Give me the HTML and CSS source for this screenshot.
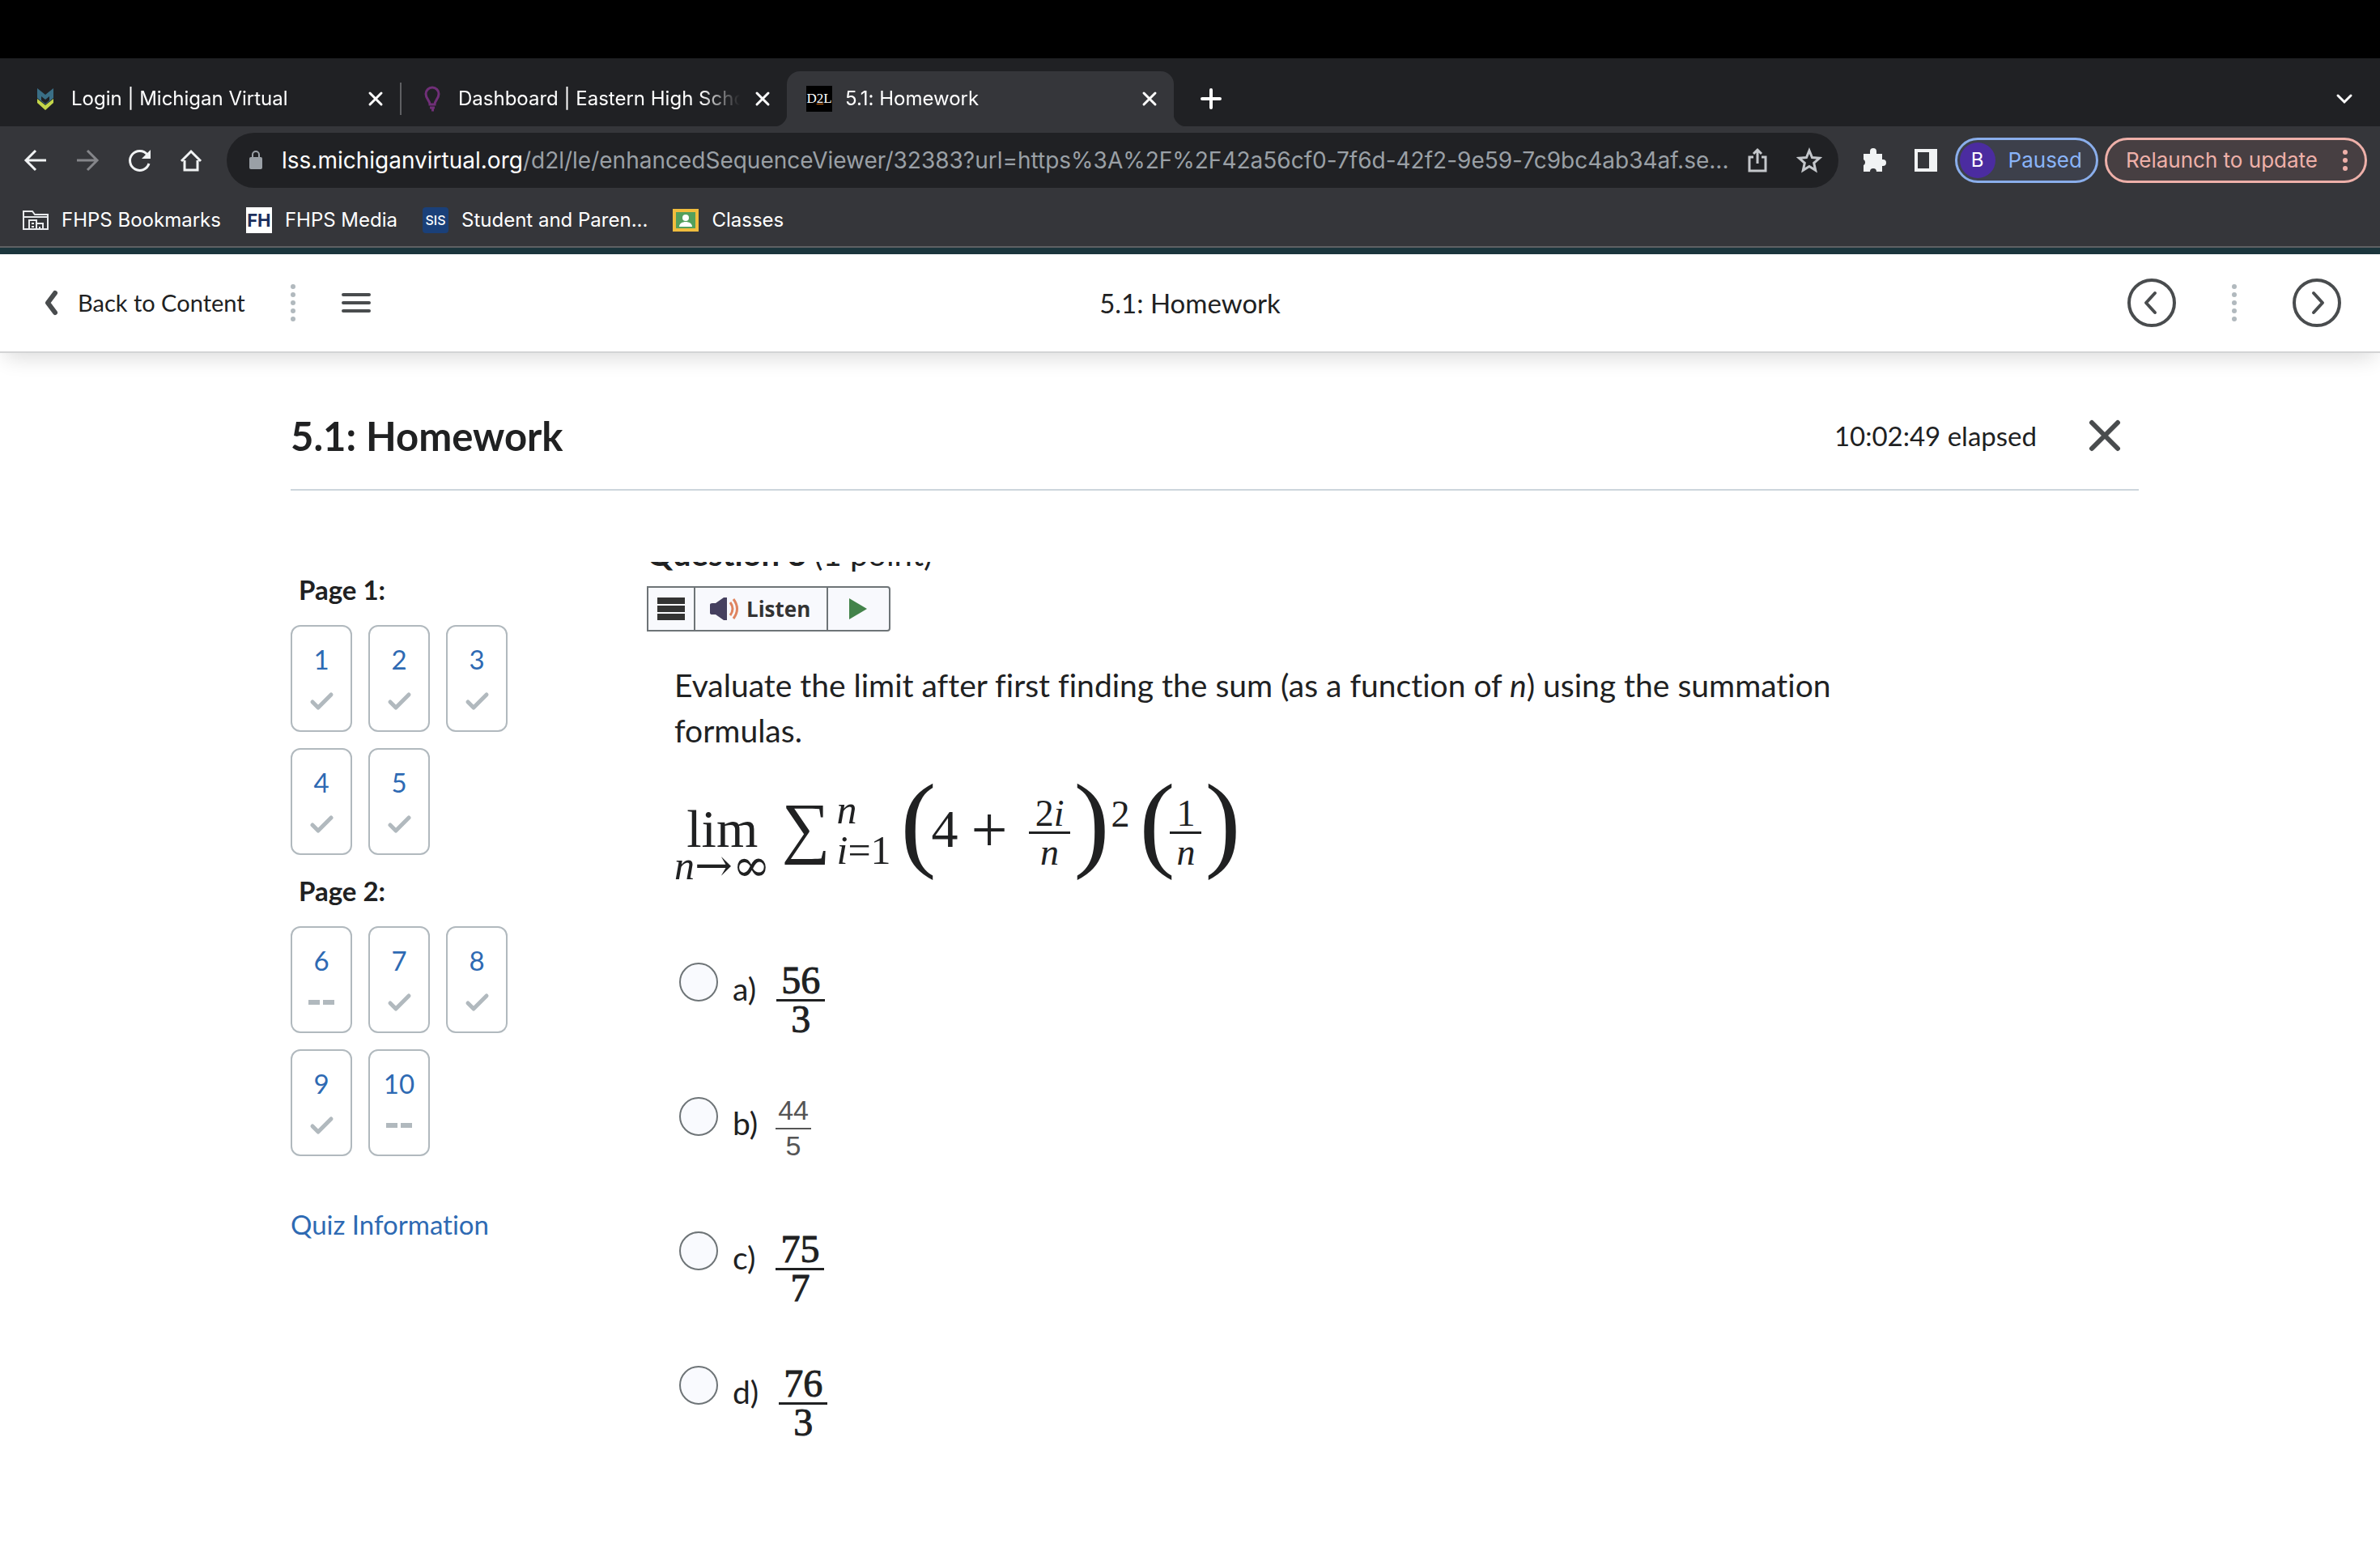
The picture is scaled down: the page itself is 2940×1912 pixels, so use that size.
FILE: index.html
```html
<!DOCTYPE html>
<html lang="en">
<head>
  <meta charset="UTF-8">
  <meta name="viewport" content="width=device-width, initial-scale=1.0">
  <title>5.1: Homework</title>
  <link rel="stylesheet" href="styles.css">
</head>
<body>
  <!-- Browser -->
  <div class="browser">
    <div class="tabstrip">
      <div class="tab">
        <svg class="favicon" viewBox="0 0 32 32"><path d="M6 3l10 8 10-8v12l-10 8-10-8z" fill="#3a6f86"/><path d="M11 13l5 4 5-4v5l-5 4-5-4z" fill="#202124"/><path d="M6 16l10 8 10-8v5l-10 9-10-9z" fill="#c3d64a"/></svg>
        <span class="tab-title">Login | Michigan Virtual</span>
        <button class="tab-close" aria-label="Close tab"><svg viewBox="0 0 32 32"><path d="M9 9l14 14M23 9L9 23"/></svg></button>
      </div>
      <div class="tab tab-divided">
        <svg class="favicon" viewBox="0 0 32 32"><path d="M13 23c0-5-5-7-5-13a8 8 0 0 1 16 0c0 6-5 8-5 13zM13 27h6M15 30h3" fill="none" stroke="#702f78" stroke-width="3"/></svg>
        <span class="tab-title">Dashboard | Eastern High School</span>
        <button class="tab-close" aria-label="Close tab"><svg viewBox="0 0 32 32"><path d="M9 9l14 14M23 9L9 23"/></svg></button>
      </div>
      <div class="tab tab-active">
        <span class="favicon d2l">D<u>2</u>L</span>
        <span class="tab-title">5.1: Homework</span>
        <button class="tab-close" aria-label="Close tab"><svg viewBox="0 0 32 32"><path d="M9 9l14 14M23 9L9 23"/></svg></button>
      </div>
      <button class="tab-new" aria-label="New tab"><svg viewBox="0 0 32 32"><path d="M16 5v22M5 16h22"/></svg></button>
      <button class="tab-search" aria-label="Search tabs"><svg viewBox="0 0 32 32"><path d="M8 12l8 8 8-8"/></svg></button>
    </div>

    <div class="toolbar">
      <button class="tool" aria-label="Back"><svg viewBox="0 0 32 32"><path d="M29 16H4M16 4L4 16l12 12"/></svg></button>
      <button class="tool tool-off" aria-label="Forward"><svg viewBox="0 0 32 32"><path d="M3 16h25M16 4l12 12-12 12"/></svg></button>
      <button class="tool" aria-label="Reload"><svg viewBox="0 0 32 32"><path d="M28 20a12 12 0 1 1-2-11l2 3"/><path d="M30 3v11H19z" fill="#f1f3f4" stroke="none"/></svg></button>
      <button class="tool" aria-label="Home"><svg viewBox="0 0 32 32"><path d="M8 16v12h16V16M4 17L16 5l12 12"/></svg></button>
      <div class="omnibox">
        <svg class="lock" viewBox="0 0 32 32"><rect x="8" y="12" width="16" height="15" rx="2" fill="#9aa0a6"/><path d="M12 13V9a4 4 0 0 1 8 0v4" fill="none" stroke="#9aa0a6" stroke-width="2"/></svg>
        <div class="url" role="textbox" aria-label="Address"><b>lss.michiganvirtual.org</b>/d2l/le/enhancedSequenceViewer/32383?url=https%3A%2F%2F42a56cf0-7f6d-42f2-9e59-7c9bc4ab34af.se...</div>
        <button class="omni-btn" aria-label="Share"><svg viewBox="0 0 32 32"><path d="M11 12H6v17h20V12h-5M16 20V3M11 8l5-5 5 5"/></svg></button>
        <button class="omni-btn" aria-label="Bookmark"><svg viewBox="0 0 32 32"><path d="M16 4l3.500 8.500 9 .8-6.800 6 2 9L16 23.500 8.300 28.300l2-9-6.800-6 9-.8z"/></svg></button>
      </div>
      <button class="tool" aria-label="Extensions"><svg viewBox="0 0 32 32"><path d="M3 8h8V5a4 4 0 0 1 8 0v3h7v7h1a4 4 0 0 1 0 8h-1v7h-7a4 4 0 0 0-8 0H3v-8a4 4 0 0 0 0-7z" fill="#f1f3f4" stroke="none"/></svg></button>
      <button class="tool" aria-label="Side panel"><svg viewBox="0 0 32 32"><path d="M2 2h28v28H2zM6 6v20h14V6z" fill="#f1f3f4" fill-rule="evenodd" stroke="none"/></svg></button>
      <button class="pill pill-blue"><span class="avatar">B</span>Paused</button>
      <button class="pill pill-red">Relaunch to update<svg viewBox="0 0 8 28"><circle cx="4" cy="4" r="3"/><circle cx="4" cy="14" r="3"/><circle cx="4" cy="24" r="3"/></svg></button>
    </div>

    <div class="bookmarks">
      <a href="#"><svg viewBox="0 0 32 32" fill="none" stroke="#e8eaed" stroke-width="2"><path d="M1 27V5h11l3 4h16v18zM1 12h30"/><path d="M8 27V16h9v11M17 20h8v7M11 20h3M11 24h3M21 24v3"/></svg>FHPS Bookmarks</a>
      <a href="#"><span class="site site-fh">FH</span>FHPS Media</a>
      <a href="#"><span class="site site-sis">SIS</span>Student and Paren...</a>
      <a href="#"><svg viewBox="0 0 32 32"><path d="M0 2h32v28H0z" fill="#f0bd3e"/><path d="M4 6h24v20H4z" fill="#54a05c"/><circle cx="16" cy="13" r="4" fill="#fff"/><path d="M8 24c0-8 16-8 16 0z" fill="#fff"/></svg>Classes</a>
    </div>
  </div>

  <!-- Content viewer bar -->
  <nav class="viewer">
    <div class="viewer-left">
      <a class="back" href="#"><svg viewBox="0 0 18 32"><path d="M14 4L5 16l9 12"/></svg>Back to Content</a>
      <svg class="dots" viewBox="0 0 6 46"><circle cx="3" cy="3" r="3"/><circle cx="3" cy="13" r="3"/><circle cx="3" cy="23" r="3"/><circle cx="3" cy="33" r="3"/><circle cx="3" cy="43" r="3"/></svg>
      <button class="menu" aria-label="Table of contents"><svg viewBox="0 0 36 24"><path d="M2 2h32M2 12h32M2 22h32"/></svg></button>
    </div>
    <span class="viewer-title">5.1: Homework</span>
    <div class="viewer-right">
      <button class="round" aria-label="Previous"><svg viewBox="0 0 60 60"><circle cx="30" cy="30" r="28"/><path d="M34 18L23 30l11 12"/></svg></button>
      <svg class="dots" viewBox="0 0 6 46"><circle cx="3" cy="3" r="3"/><circle cx="3" cy="13" r="3"/><circle cx="3" cy="23" r="3"/><circle cx="3" cy="33" r="3"/><circle cx="3" cy="43" r="3"/></svg>
      <button class="round" aria-label="Next"><svg viewBox="0 0 60 60"><circle cx="30" cy="30" r="28"/><path d="M26 18l11 12-11 12"/></svg></button>
    </div>
  </nav>

  <!-- Quiz -->
  <div class="quiz">
    <header class="quiz-header">
      <h1>5.1: Homework</h1>
      <span class="timer">10:02:49 elapsed</span>
      <button class="exit" aria-label="Exit quiz"><svg viewBox="0 0 40 40"><path d="M4 4l32 32M36 4L4 36"/></svg></button>
    </header>

    <div class="quiz-body">
      <aside class="pages">
        <h2>Page 1:</h2>
        <div class="numbers">
          <a href="#">1<svg viewBox="0 0 32 32"><path class="check" d="M5 17l7 7L28 8"/></svg></a>
          <a href="#">2<svg viewBox="0 0 32 32"><path class="check" d="M5 17l7 7L28 8"/></svg></a>
          <a href="#">3<svg viewBox="0 0 32 32"><path class="check" d="M5 17l7 7L28 8"/></svg></a>
          <a href="#">4<svg viewBox="0 0 32 32"><path class="check" d="M5 17l7 7L28 8"/></svg></a>
          <a href="#">5<svg viewBox="0 0 32 32"><path class="check" d="M5 17l7 7L28 8"/></svg></a>
        </div>
        <h2>Page 2:</h2>
        <div class="numbers">
          <a href="#">6<svg viewBox="0 0 32 32"><path class="dash" d="M0 16h14M18 16h14"/></svg></a>
          <a href="#">7<svg viewBox="0 0 32 32"><path class="check" d="M5 17l7 7L28 8"/></svg></a>
          <a href="#">8<svg viewBox="0 0 32 32"><path class="check" d="M5 17l7 7L28 8"/></svg></a>
          <a href="#">9<svg viewBox="0 0 32 32"><path class="check" d="M5 17l7 7L28 8"/></svg></a>
          <a href="#">10<svg viewBox="0 0 32 32"><path class="dash" d="M0 16h14M18 16h14"/></svg></a>
        </div>
        <a class="info" href="#">Quiz Information</a>
      </aside>

      <main class="question">
        <h2 class="question-title">Question 8 <span>(1 point)</span></h2>
        <div class="reader">
          <button aria-label="Reader menu"><svg class="bars" viewBox="0 0 34 28"><path d="M0 4h34M0 14h34M0 24h34"/></svg></button>
          <button><svg class="speaker" viewBox="0 0 36 28"><path d="M0 9q0-2 3-2h4l10-7h4v28h-4L7 21H3q-3 0-3-2z" fill="#45405f"/><path d="M25 6q6 8 0 16M29 2q9 12 0 24" fill="none" stroke="#df8460" stroke-width="3"/></svg>Listen</button>
          <button aria-label="Play"><svg class="play" viewBox="0 0 22 26"><path d="M0 0l22 13L0 26z"/></svg></button>
        </div>

        <div class="prompt">
          <p>Evaluate the limit after first finding the sum (as a function of <i>n</i>) using the summation formulas.</p>
          <div class="formula">
            <span class="lim"><span>lim</span><small><i>n</i><span class="symbol">→∞</span></small></span>
            <span class="sum">∑</span>
            <span class="limits"><i>n</i><span><i>i</i>=1</span></span>
            <span class="paren open">(</span>
            <span class="term">4</span>
            <span class="plus">+</span>
            <span class="frac"><span>2<i>i</i></span><i>n</i></span>
            <span class="paren close">)</span>
            <span class="power">2</span>
            <span class="paren open">(</span>
            <span class="frac"><span>1</span><i>n</i></span>
            <span class="paren close">)</span>
          </div>
        </div>

        <div class="answers">
          <label><input type="radio" name="answer">a)<span class="value"><span>56</span><span>3</span></span></label>
          <label><input type="radio" name="answer">b)<span class="value value-small"><span>44</span><span>5</span></span></label>
          <label><input type="radio" name="answer">c)<span class="value"><span>75</span><span>7</span></span></label>
          <label><input type="radio" name="answer">d)<span class="value"><span>76</span><span>3</span></span></label>
        </div>
      </main>
    </div>
  </div>
</body>
</html>
```
FILE: styles.css
```css
* {
  box-sizing: border-box;
}
body {
  margin: 0;
  background: #fff;
  color: #202122;
  font-family: Lato, sans-serif;
  font-size: 33px;
  font-variant-ligatures: none;
  line-height: 40px;
}
button {
  background: none;
  border: none;
  padding: 0;
  margin: 0;
  font: inherit;
  color: inherit;
  cursor: pointer;
}
a {
  text-decoration: none;
}
svg {
  display: block;
  flex: none;
}

/* browser */
.browser {
  border-top: 72px solid #000;
  border-bottom: 8px solid #1c363d;
  background: #35363a;
  color: #fff;
  font-family: Inter, sans-serif;
  font-size: 24px;
  line-height: 32px;
}
.tabstrip {
  display: flex;
  align-items: center;
  height: 84px;
  padding: 16px 28px 0 16px;
  background: #202124;
}
.tab {
  position: relative;
  display: flex;
  align-items: center;
  gap: 16px;
  width: 478px;
  height: 68px;
  padding: 0 14px 0 24px;
}
.tab-divided::before {
  content: "";
  position: absolute;
  left: 0;
  top: 14px;
  width: 2px;
  height: 40px;
  background: #5f6063;
}
.tab-active {
  background: #35363a;
  border-radius: 16px 16px 0 0;
}
.tab-active::before,
.tab-active::after {
  content: "";
  position: absolute;
  bottom: 0;
  width: 16px;
  height: 16px;
}
.tab-active::before {
  left: -16px;
  background: radial-gradient(circle at 0 0, #202124 16px, #35363a 17px);
}
.tab-active::after {
  right: -16px;
  background: radial-gradient(circle at 100% 0, #202124 16px, #35363a 17px);
}
.favicon {
  width: 32px;
  height: 32px;
  flex: none;
}
.d2l {
  background: #000;
  font-family: "Liberation Serif", serif;
  font-size: 17px;
  text-align: center;
}
.d2l u {
  text-decoration-color: #e87511;
}
.tab-title {
  flex: 1;
  margin-right: -4px;
  overflow: hidden;
  white-space: nowrap;
  -webkit-mask-image: linear-gradient(to right, #000 86%, transparent);
  mask-image: linear-gradient(to right, #000 86%, transparent);
}
.tab-close svg,
.tab-new svg,
.tab-search svg {
  width: 32px;
  height: 32px;
  fill: none;
  stroke: #fff;
  stroke-width: 3;
  stroke-linecap: round;
}
.tab-new {
  margin-left: 30px;
}
.tab-new svg {
  stroke-width: 4;
}
.tab-search {
  margin-left: auto;
}
.toolbar {
  display: flex;
  align-items: center;
  gap: 32px;
  height: 84px;
  padding: 0 16px 0 28px;
}
.tool svg {
  width: 32px;
  height: 32px;
  fill: none;
  stroke: #f1f3f4;
  stroke-width: 3;
}
.tool-off svg {
  stroke: #85868a;
}
.omnibox {
  flex: 1;
  min-width: 0;
  display: flex;
  align-items: center;
  gap: 32px;
  height: 68px;
  margin: 0 -4px 0 -4px;
  padding: 0 20px;
  border-radius: 34px;
  background: #202124;
  color: #9aa0a6;
  font-size: 28px;
}
.lock {
  width: 32px;
  height: 32px;
  margin-right: -16px;
}
.url {
  flex: 1;
  margin-right: -20px;
  overflow: hidden;
  white-space: nowrap;
}
.url b {
  color: #fff;
  font-weight: 400;
}
.omni-btn svg {
  width: 32px;
  height: 32px;
  fill: none;
  stroke: #c4c7cb;
  stroke-width: 3;
}
.pill {
  display: flex;
  align-items: center;
  height: 56px;
  border: 3px solid;
  border-radius: 28px;
  font-size: 26px;
  white-space: nowrap;
}
.pill-blue {
  gap: 16px;
  margin: 0 -24px 0 -12px;
  padding: 0 17px 0 3px;
  color: #8ab4f8;
  background: #3d404b;
  border-color: #8aaeeb;
}
.avatar {
  width: 44px;
  height: 44px;
  border-radius: 50%;
  background: #4b2ca0;
  color: #fff;
  font-size: 24px;
  line-height: 44px;
}
.pill-red {
  gap: 30px;
  padding: 0 20px 0 23px;
  color: #eeb0a9;
  background: #473f42;
}
.pill-red svg {
  width: 8px;
  height: 28px;
  fill: #eeb0a9;
}
.bookmarks {
  display: flex;
  gap: 31px;
  height: 66px;
  padding: 16px 28px 0;
  border-bottom: 2px solid #5f6063;
}
.bookmarks a {
  display: flex;
  gap: 16px;
  height: 32px;
  color: #fff;
}
.bookmarks svg,
.site {
  width: 32px;
  height: 32px;
}
.site {
  font-weight: 700;
  text-align: center;
}
.site-fh {
  background: #fff;
  color: #1d2f5c;
  font-size: 22px;
}
.site-sis {
  background: #1a4079;
  border-radius: 4px;
  font-size: 16px;
  font-weight: 500;
}

/* viewer bar */
.viewer {
  display: grid;
  grid-template-columns: 1fr auto 1fr;
  align-items: center;
  height: 122px;
  padding: 0 48px;
  border-bottom: 2px solid #d3d4d5;
  box-shadow: 0 12px 24px -6px rgba(0, 0, 0, 0.14);
}
.viewer-left,
.viewer-right,
.back {
  display: flex;
  align-items: center;
}
.viewer-right {
  justify-content: flex-end;
  gap: 69px;
}
.back {
  gap: 24px;
  padding-left: 6px;
  color: #202122;
  font-size: 29px;
}
.back svg {
  width: 18px;
  height: 32px;
  stroke-width: 6;
}
.back svg,
.menu svg,
.round svg,
.exit svg {
  fill: none;
  stroke: #494c4e;
  stroke-linecap: round;
  stroke-linejoin: round;
}
.dots {
  width: 6px;
  height: 46px;
  fill: #b1b9be;
}
.viewer-left .dots {
  margin: 0 57px 0 56px;
}
.menu svg {
  width: 36px;
  height: 24px;
  stroke-width: 4;
}
.round svg {
  width: 60px;
  height: 60px;
  stroke-width: 4;
}

/* quiz */
.quiz {
  padding: 0 298px 0 359px;
}
.quiz-header {
  display: flex;
  align-items: center;
  padding: 73px 22px 37px 0;
  border-bottom: 2px solid #cdd5dc;
}
.quiz-header h1 {
  flex: 1;
  margin: 0;
  font-size: 49px;
  line-height: 58px;
}
.exit {
  margin-left: 64px;
}
.exit svg {
  width: 40px;
  height: 40px;
  stroke-width: 6;
}
.quiz-body {
  display: flex;
  padding-top: 88px;
}
.pages {
  width: 440px;
  padding-top: 14px;
}
.pages h2 {
  margin: 0 0 24px 10px;
  font-size: 33px;
}
.numbers {
  display: flex;
  flex-wrap: wrap;
  gap: 20px;
  width: 280px;
  margin-bottom: 24px;
}
.numbers a {
  display: flex;
  flex-direction: column;
  align-items: center;
  gap: 16px;
  width: 76px;
  height: 132px;
  padding-top: 20px;
  border: 2px solid #b1b9be;
  border-radius: 12px;
  color: #2e6ab3;
}
.numbers svg {
  width: 32px;
  height: 32px;
  fill: none;
  stroke: #b1b9be;
}
.check {
  stroke-width: 5;
  stroke-linecap: round;
  stroke-linejoin: round;
}
.dash {
  stroke-width: 6;
}
.info {
  display: block;
  margin-top: 64px;
  color: #2e6ab3;
}
.question {
  flex: 1;
  overflow: hidden;
  font-size: 39px;
}
/* scrolled partly out of view */
.question-title {
  margin: -33px 0 17px;
  font-size: 40px;
  line-height: 46px;
}
.question-title span {
  font-weight: 400;
}
.reader {
  display: inline-flex;
  height: 56px;
  border: 2px solid #6e7477;
  border-radius: 0 4px 4px 0;
  background: #f8f9fd;
  vertical-align: top;
}
.reader button {
  display: flex;
  align-items: center;
  gap: 9px;
  padding: 0 20px 0 18px;
  color: #333;
  font-family: "Open Sans", sans-serif;
  font-size: 26px;
  font-weight: 700;
}
.reader button:first-child {
  padding: 0 11px;
}
.reader button:last-child {
  padding: 0 27px 0 26px;
}
.reader button + button {
  border-left: 2px solid #6e7477;
}
.bars {
  width: 34px;
  height: 28px;
  stroke: #333;
  stroke-width: 8;
}
.speaker {
  width: 36px;
  height: 28px;
}
.play {
  width: 22px;
  height: 26px;
  fill: #43834a;
}
.prompt {
  padding: 38px 300px 0 34px;
}
.prompt p {
  margin: 0 0 40px;
  line-height: 56px;
}

/* math */
.formula {
  display: flex;
  align-items: flex-start;
  height: 118px;
  font-family: "Liberation Serif", serif;
  font-size: 46px;
}
.lim {
  display: flex;
  flex-direction: column;
  align-items: center;
  padding-top: 27px;
  font-size: 66px;
  line-height: 54px;
}
.lim small {
  display: flex;
  font-size: 50px;
  line-height: 36px;
}
.symbol {
  font-family: "DejaVu Serif", serif;
  font-size: 56px;
}
.sum {
  margin-left: 14px;
  font-size: 84px;
  line-height: 104px;
}
.limits {
  display: flex;
  flex-direction: column;
  margin-left: 8px;
  padding-top: 5px;
  font-size: 50px;
  line-height: 50px;
}
.paren {
  font-size: 132px;
  line-height: 90px;
}
.open {
  margin: 0 -6px 0 12px;
}
.close {
  margin: 0 2px 0 4px;
}
.term {
  font-size: 66px;
  line-height: 108px;
}
.plus {
  margin: 0 26px 0 16px;
  font-size: 80px;
  line-height: 110px;
}
.frac {
  display: flex;
  flex-direction: column;
  padding-top: 13px;
  line-height: 46px;
  text-align: center;
}
.frac span {
  padding: 0 8px;
  border-bottom: 3px solid #202122;
  line-height: 44px;
}
.power {
  line-height: 72px;
}

/* answers */
.answers {
  display: flex;
  flex-direction: column;
  gap: 40px;
  padding: 100px 0 0 40px;
}
.answers label {
  display: flex;
  align-items: flex-start;
  height: 126px;
  line-height: 66px;
}
.answers input {
  appearance: none;
  width: 48px;
  height: 48px;
  margin: 1px 18px 0 0;
  border: 2px solid #6e7477;
  border-radius: 50%;
  background: #f9fafe;
}
.value {
  display: flex;
  flex-direction: column;
  margin-left: 25px;
  font-family: "Liberation Serif", serif;
  font-size: 48px;
  line-height: 44px;
  text-align: center;
  -webkit-text-stroke: 1px #202122;
}
.value span:first-child {
  padding: 0 6px;
  border-bottom: 3px solid #202122;
  line-height: 46px;
}
.value-small {
  margin-left: 22px;
  color: #555;
  font-family: "Liberation Sans", sans-serif;
  font-size: 34px;
  line-height: 40px;
  -webkit-text-stroke: 0;
}
.value-small span:first-child {
  padding: 0 3px 5px;
  border-bottom: 2px solid #555;
  line-height: 34px;
}
```
